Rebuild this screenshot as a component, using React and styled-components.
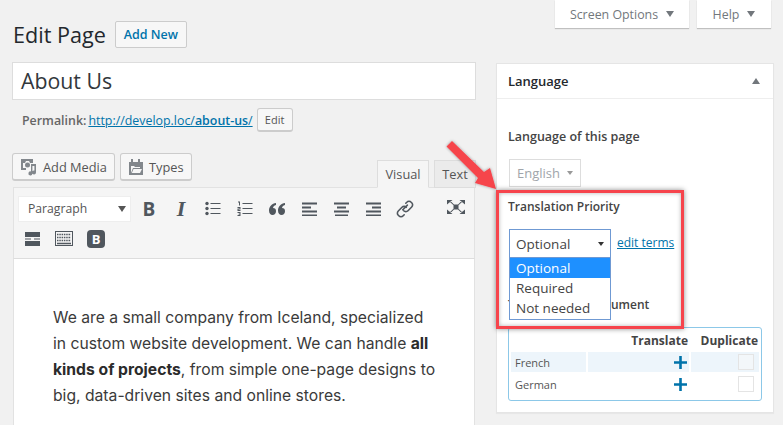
import React from "react";
import styled, { createGlobalStyle } from "styled-components";

const GlobalStyle = createGlobalStyle`
  html, body {
    margin: 0;
    padding: 0;
    background: #f1f1f1;
    overflow: hidden;
  }
  * {
    box-sizing: border-box;
  }
`;

const Page = styled.div`
  position: relative;
  width: 783px;
  height: 425px;
  overflow: hidden;
  display: flex;
  align-items: flex-start;
  font-family: "Open Sans", "Noto Sans", sans-serif;
  color: #444;
`;

const Main = styled.div`
  width: 462px;
  margin-left: 13px;
  padding-top: 21px;
`;

const Side = styled.div`
  width: 278px;
  margin-left: 21px;
`;

const HeadingRow = styled.div`
  display: flex;
  align-items: center;
  gap: 9px;
  height: 27px;
`;

const Title = styled.h1`
  margin: 0;
  font-size: 21.6px;
  font-weight: 400;
  line-height: 27px;
  color: #23282d;
`;

const AddNew = styled.a`
  height: 27px;
  width: 72px;
  display: flex;
  align-items: center;
  justify-content: center;
  border: 1px solid #ccc;
  border-radius: 2px;
  background: #f7f7f7;
  font-size: 12.5px;
  font-weight: 600;
  color: #0073aa;
`;

const TitleInput = styled.div`
  margin: 14px -1px 0 -1px;
  height: 38px;
  border: 1px solid #ddd;
  background: #fff;
  padding-left: 8px;
  font-size: 21.3px;
  line-height: 36px;
  color: #32373c;
`;

const PermalinkRow = styled.div`
  display: flex;
  align-items: center;
  height: 24px;
  margin-top: 8px;
  padding-left: 9px;
  font-size: 12.4px;
  color: #666;
  b {
    font-weight: 600;
    margin-right: 2px;
  }
  a {
    color: #0073aa;
    text-decoration: underline;
  }
  a b {
    margin: 0;
  }
`;

const SmallButton = styled.span`
  margin-left: 4px;
  width: 36px;
  height: 24px;
  display: flex;
  align-items: center;
  justify-content: center;
  border: 1px solid #ccc;
  border-bottom-width: 2px;
  border-radius: 3px;
  background: #f7f7f7;
  font-size: 11px;
  color: #555;
`;

const EditorTop = styled.div`
  display: flex;
  align-items: flex-end;
  margin: 21px -1px 0 -1px;
  height: 34px;
`;

const MediaButton = styled.span`
  height: 28px;
  align-self: flex-start;
  display: flex;
  align-items: center;
  gap: 5px;
  padding: 0 7px;
  margin-right: 5px;
  border: 1px solid #ccc;
  border-bottom-width: 2px;
  border-radius: 3px;
  background: #f7f7f7;
  font-size: 12.8px;
  color: #555;
`;

const Tabs = styled.div`
  margin-left: auto;
  display: flex;
  gap: 5px;
`;

const Tab = styled.span`
  height: 28px;
  width: ${(p) => (p.$active ? "52px" : "42px")};
  display: flex;
  align-items: center;
  justify-content: center;
  border: 1px solid #ddd;
  border-bottom: ${(p) => (p.$active ? "1px solid #f5f5f5" : "1px solid #ddd")};
  background: ${(p) => (p.$active ? "#f5f5f5" : "#ebebeb")};
  font-size: 12.8px;
  color: #555;
  margin-bottom: -1px;
  position: relative;
`;

const Toolbar = styled.div`
  height: 72px;
  background: #f5f5f5;
  border: 1px solid #e2e2e2;
  border-bottom: 1px solid #ddd;
  padding: 7px 0 0 4px;
`;

const ToolRow = styled.div`
  display: flex;
  align-items: center;
  height: 27px;
  margin-bottom: 3px;
`;

const SecondToolRow = styled(ToolRow)`
  margin-left: -2px;
`;

const FormatSelect = styled.div`
  width: 113px;
  height: 26px;
  background: #fff;
  display: flex;
  align-items: center;
  justify-content: space-between;
  padding: 0 4px 0 9px;
  margin-right: 2px;
  font-size: 12.2px;
  color: #555;
  border: 1px solid #eee;
`;

const Tool = styled.span`
  width: 32px;
  height: 26px;
  display: flex;
  align-items: center;
  justify-content: center;
  color: #50575e;
  font-size: ${(p) => p.$size || "20px"};
  font-weight: 700;
  font-family: ${(p) => p.$serif ? '"Liberation Serif", serif' : '"Open Sans", sans-serif'};
  font-style: ${(p) => (p.$italic ? "italic" : "normal")};
`;

const ExpandTool = styled(Tool)`
  margin-left: 19px;
  margin-top: -4px;
`;

const BootstrapTool = styled.span`
  width: 18px;
  height: 18px;
  margin-left: 7px;
  border-radius: 4px;
  background: #50575e;
  color: #fff;
  font-size: 13px;
  font-weight: 700;
  display: flex;
  align-items: center;
  justify-content: center;
`;

const EditorBody = styled.div`
  height: 170px;
  background: #fff;
  border-left: 1px solid #e2e2e2;
  border-right: 1px solid #e2e2e2;
  padding: 46px 0 0 39px;
  margin: 0;
  font-family: "Inter", "Liberation Sans", sans-serif;
  font-size: 15.7px;
  line-height: 26px;
  color: #3a3a3a;
  b {
    font-weight: 700;
    color: #2b2b2b;
  }
`;

const ScreenTabs = styled.div`
  display: flex;
  justify-content: flex-end;
  gap: 8px;
  height: 28px;
  padding-right: 3px;
  margin-bottom: 35px;
`;

const ScreenTab = styled.span`
  width: ${(p) => p.$width};
  height: 28px;
  background: #fff;
  box-shadow: 0 1px 1px rgba(0, 0, 0, 0.2);
  display: flex;
  align-items: center;
  justify-content: center;
  gap: 8px;
  font-size: 12.4px;
  color: #72777c;
`;

const Caret = styled.i`
  width: 0;
  height: 0;
  display: block;
  border-left: ${(p) => p.$size || 4}px solid transparent;
  border-right: ${(p) => p.$size || 4}px solid transparent;
  ${(p) => p.$up ? "border-bottom" : "border-top"}: ${(p) => p.$size ? p.$size + 1 : 6}px solid ${(p) => p.$color || "#72777c"};
`;

const Box = styled.div`
  height: 350px;
  background: #fff;
  border: 1px solid #e5e5e5;
  box-shadow: 0 1px 1px rgba(0, 0, 0, 0.04);
`;

const BoxHeader = styled.div`
  height: 35px;
  display: flex;
  align-items: center;
  justify-content: space-between;
  padding: 0 13px 0 11px;
  border-bottom: 1px solid #eee;
  font-size: 13px;
  font-weight: 600;
  color: #23282d;
`;

const BoxBody = styled.div`
  padding: 29px 12px 0 11px;
`;

const Label = styled.div`
  font-size: ${(p) => p.$size || "12.5px"};
  font-weight: 600;
  line-height: 18px;
  color: #444;
`;

const LangSelect = styled.div`
  width: 72px;
  height: 28px;
  margin: 13px 0 0 1px;
  border: 1px solid #ddd;
  display: flex;
  align-items: center;
  justify-content: space-between;
  padding: 0 7px;
  font-size: 13px;
  color: #a0a5aa;
`;

const PriorityLabel = styled(Label)`
  margin-top: 11px;
`;

const PriorityRow = styled.div`
  position: relative;
  display: flex;
  align-items: center;
  gap: 6px;
  height: 28px;
  margin: 13px 0 0 1px;
  a {
    font-size: 12px;
    color: #0073aa;
    text-decoration: underline;
    margin-top: -2px;
  }
`;

const PrioritySelect = styled.div`
  width: 102px;
  height: 28px;
  border: 1px solid #6f99d3;
  border-bottom: none;
  background: #fff;
  display: flex;
  align-items: center;
  justify-content: space-between;
  padding: 0 6px 0 6px;
  font-size: 13.5px;
  color: #444;
`;

const Dropdown = styled.ul`
  position: absolute;
  left: 0;
  top: 28px;
  z-index: 2;
  width: 102px;
  margin: 0;
  padding: 0 0 1px;
  list-style: none;
  background: #fff;
  border: 1px solid #6f99d3;
  font-size: 13.5px;
  color: #444;
`;

const Option = styled.li`
  height: 20px;
  line-height: 20px;
  padding-left: 6px;
  background: ${(p) => (p.$selected ? "#1e90ff" : "transparent")};
  color: ${(p) => (p.$selected ? "#fff" : "inherit")};
`;

const DocLabel = styled(Label)`
  margin-top: 39px;
`;

const TableFrame = styled.div`
  margin-top: 13px;
  width: 254px;
  height: 74px;
  border: 1px solid #8cc8e8;
  border-radius: 3px;
`;

const LangTable = styled.table`
  width: 252px;
  border-collapse: separate;
  border-spacing: 2px;
  margin: 0;
  table-layout: fixed;
  th {
    text-align: right;
    font-size: 12px;
    font-weight: 700;
    color: #444;
    height: 20px;
    padding: 0 1px 0 0;
    white-space: nowrap;
  }
`;

const Row = styled.tr`
  td {
    height: 20px;
    padding: 0 4px;
    font-size: 11px;
    color: #555;
    background: ${(p) => (p.$shaded ? "#edf5fb" : "transparent")};
  }
  td.plus {
    text-align: right;
    color: #0073aa;
    padding-right: 2px;
  }
  td.check {
    padding-right: 5px;
  }
`;

const Check = styled.span`
  display: block;
  width: 16px;
  height: 16px;
  margin-left: auto;
  border: 1px solid #e4e4e4;
  background: ${(p) => (p.$shaded ? "#f3f7fa" : "#fff")};
`;

const Highlight = styled.div`
  position: absolute;
  left: 496px;
  top: 190px;
  width: 188px;
  height: 139px;
  z-index: 3;
  border: 3px solid #f6444c;
  box-shadow: 0 0 5px rgba(0, 0, 0, 0.45), inset 0 0 4px rgba(0, 0, 0, 0.3);
  pointer-events: none;
`;

const ArrowMark = styled.svg`
  position: absolute;
  left: 440px;
  top: 135px;
  z-index: 3;
  overflow: visible;
`;

const IconGlyph = styled.svg`
  display: block;
  fill: currentColor;
`;

function MediaIcon() {
  return (
    <IconGlyph width="18" height="18" viewBox="0 0 18 18" style={{ color: "#82878c" }}>
      <path d="M1 1h12v4h-3l-1-2H6L5 5 3 5v5l3 0v2H1z" />
      <circle cx="7.5" cy="7" r="2.5" />
      <path d="M11 6h5v8.5a2 2 0 1 1-1.6-2V8h-2v7.5a2 2 0 1 1-1.4-2z" />
    </IconGlyph>
  );
}

function TypesIcon() {
  return (
    <IconGlyph width="16" height="18" viewBox="0 0 16 18" style={{ color: "#82878c" }}>
      <path d="M3 1h2v3h5V1h2v3h3v13H1V4h2z" />
      <path fill="#f7f7f7" d="M3 8h3l1 1h5v1H5l-2 5zM5.5 11H14l-2 4H3.800z" />
    </IconGlyph>
  );
}

const BulletIcon = () => (
  <IconGlyph width="16" height="15" viewBox="0 0 16 15">
    <circle cx="2" cy="2.500" r="1.700" />
    <circle cx="2" cy="7.500" r="1.700" />
    <circle cx="2" cy="12.500" r="1.700" />
    <path d="M5.500 2h10v1h-10zM5.500 7h10v1h-10zM5.500 12h10v1h-10z" />
  </IconGlyph>
);

const NumberIcon = () => (
  <IconGlyph width="16" height="15" viewBox="0 0 16 15">
    <path d="M5.500 2h10v1h-10zM5.500 7h10v1h-10zM5.500 12h10v1h-10z" />
    <path d="M1 0.500h2v4H2V1.500H1zM0.500 6h3v2.500h-2v.6h2V10h-3V7.500h2V7h-2zM0.500 11h3v4h-3v-1h2v-.5h-1v-.8h1V12h-2z" />
  </IconGlyph>
);

const QuoteIcon = () => (
  <IconGlyph width="16" height="12" viewBox="0 0 16 12">
    <path d="M7 0v2C5 2.500 4 4 4 5c2 0 3 1 3 3.200S5.500 12 3.500 12 0 10.300 0 7.500C0 3.500 3 .5 7 0zM16 0v2c-2 .5-3 2-3 3 2 0 3 1 3 3.200S14.500 12 12.500 12 9 10.300 9 7.500C9 3.500 12 .5 16 0z" />
  </IconGlyph>
);

const AlignIcon = ({ rows }) => (
  <IconGlyph width="15" height="14" viewBox="0 0 15 14">
    {rows.map(([x, w], i) => (
      <rect key={i} x={x} y={i * 4 + 0.5} width={w} height="2" />
    ))}
  </IconGlyph>
);

const LinkIcon = () => (
  <svg width="18" height="18" viewBox="0 0 18 18" fill="none" stroke="currentColor" strokeWidth="1.600" strokeLinecap="round" strokeLinejoin="round">
    <path d="M6.800 9.800l4.600-4.700" />
    <path d="M9.800 3.200l1-1a3 3 0 0 1 4.400 0l.5.500a3 3 0 0 1 0 4.300L12 10.700a3 3 0 0 1-4.300 0" />
    <path d="M8.200 14.800l-1 1a3 3 0 0 1-4.400 0l-.5-.5a3 3 0 0 1 0-4.300L6 7.300a3 3 0 0 1 4.300 0" />
  </svg>
);

const ExpandIcon = () => (
  <IconGlyph width="18" height="14" viewBox="0 0 18 14">
    <path d="M0 0h5.500L0 4.500zM18 0h-5.500L18 4.500zM0 14h5.500L0 9.500zM18 14h-5.500L18 9.500z" />
    <path d="M3 2h1.500L7 4.500h4L13.500 2H15l-3.500 3.200v3.600L15 12h-1.500L11 9.500H7L4.500 12H3l3.500-3.200V5.200z" />
  </IconGlyph>
);

const BreakIcon = () => (
  <IconGlyph width="15" height="14" viewBox="0 0 15 14">
    <path d="M0 0h15v5H0zM0 6.500h6v1H0zM9 6.500h6v1H9zM0 9h15v5H0z" />
  </IconGlyph>
);

const KeyboardIcon = () => (
  <svg width="18" height="15" viewBox="0 0 18 15" fill="none" stroke="currentColor">
    <rect x="0.500" y="0.500" width="17" height="14" />
    <path d="M2 3.500h14M2 6.500h14M2 9.500h14" strokeDasharray="1.500 .8" strokeWidth="1.500" />
    <path d="M2 12.500h14" strokeWidth="1.500" />
  </svg>
);

const PlusIcon = () => (
  <svg width="13" height="13" viewBox="0 0 13 13" style={{ display: "block", marginLeft: "auto" }}>
    <path d="M5.200 0h2.600v5.200H13v2.600H7.800V13H5.200V7.800H0V5.200h5.200z" fill="currentColor" />
  </svg>
);

export default function App() {
  return (
    <Page>
      <GlobalStyle />
      <Main>
        <HeadingRow>
          <Title>Edit Page</Title>
          <AddNew>Add New</AddNew>
        </HeadingRow>
        <TitleInput>About Us</TitleInput>
        <PermalinkRow>
          <b>Permalink:</b>
          <a>http://develop.loc/<b>about-us</b>/</a>
          <SmallButton>Edit</SmallButton>
        </PermalinkRow>
        <EditorTop>
          <MediaButton><MediaIcon />Add Media</MediaButton>
          <MediaButton><TypesIcon />Types</MediaButton>
          <Tabs>
            <Tab $active>Visual</Tab>
            <Tab>Text</Tab>
          </Tabs>
        </EditorTop>
        <Toolbar>
          <ToolRow>
            <FormatSelect>Paragraph<Caret $color="#555" /></FormatSelect>
            <Tool $size="19px">B</Tool>
            <Tool $size="22px" $serif $italic>I</Tool>
            <Tool><BulletIcon /></Tool>
            <Tool><NumberIcon /></Tool>
            <Tool><QuoteIcon /></Tool>
            <Tool><AlignIcon rows={[[0, 15], [0, 9], [0, 15], [0, 15]]} /></Tool>
            <Tool><AlignIcon rows={[[0, 15], [3, 9], [0, 15], [1, 13]]} /></Tool>
            <Tool><AlignIcon rows={[[0, 15], [6, 9], [0, 15], [0, 15]]} /></Tool>
            <Tool><LinkIcon /></Tool>
            <ExpandTool><ExpandIcon /></ExpandTool>
          </ToolRow>
          <SecondToolRow>
            <Tool><BreakIcon /></Tool>
            <Tool><KeyboardIcon /></Tool>
            <BootstrapTool>B</BootstrapTool>
          </SecondToolRow>
        </Toolbar>
        <EditorBody>
          We are a small company from Iceland, specialized<br />
          in custom website development. We can handle <b>all</b><br />
          <b>kinds of projects</b>, from simple one-page designs to<br />
          big, data-driven sites and online stores.
        </EditorBody>
      </Main>
      <Side>
        <ScreenTabs>
          <ScreenTab $width="134px">Screen Options <Caret /></ScreenTab>
          <ScreenTab $width="74px">Help <Caret /></ScreenTab>
        </ScreenTabs>
        <Box>
          <BoxHeader>Language <Caret $up /></BoxHeader>
          <BoxBody>
            <Label>Language of this page</Label>
            <LangSelect>English <Caret $size={3} $color="#999" /></LangSelect>
            <PriorityLabel $size="12px">Translation Priority</PriorityLabel>
            <PriorityRow>
              <PrioritySelect>Optional <Caret $size={3} $color="#333" /></PrioritySelect>
              <a>edit terms</a>
              <Dropdown>
                <Option $selected>Optional</Option>
                <Option>Required</Option>
                <Option>Not needed</Option>
              </Dropdown>
            </PriorityRow>
            <DocLabel $size="12px">Translate this document</DocLabel>
            <TableFrame>
              <LangTable>
                <colgroup>
                  <col style={{ width: "75px" }} />
                  <col style={{ width: "101px" }} />
                  <col style={{ width: "68px" }} />
                </colgroup>
                <thead>
                  <tr><th></th><th>Translate</th><th>Duplicate</th></tr>
                </thead>
                <tbody>
                  <Row $shaded>
                    <td>French</td>
                    <td className="plus"><PlusIcon /></td>
                    <td className="check"><Check $shaded /></td>
                  </Row>
                  <Row>
                    <td>German</td>
                    <td className="plus"><PlusIcon /></td>
                    <td className="check"><Check /></td>
                  </Row>
                </tbody>
              </LangTable>
            </TableFrame>
          </BoxBody>
        </Box>
      </Side>
      <ArrowMark width="60" height="60" viewBox="0 0 60 60">
        <defs>
          <filter id="arrowShadow" x="-20%" y="-20%" width="140%" height="140%">
            <feDropShadow dx="0" dy="0" stdDeviation="1.500" floodColor="#000" floodOpacity="0.4" />
          </filter>
        </defs>
        <path filter="url(#arrowShadow)" fill="#f6444c" d="M12 6L6.500 11.500 38 43 35 48 56 54 50 33 44 37z" />
      </ArrowMark>
      <Highlight />
    </Page>
  );
}
